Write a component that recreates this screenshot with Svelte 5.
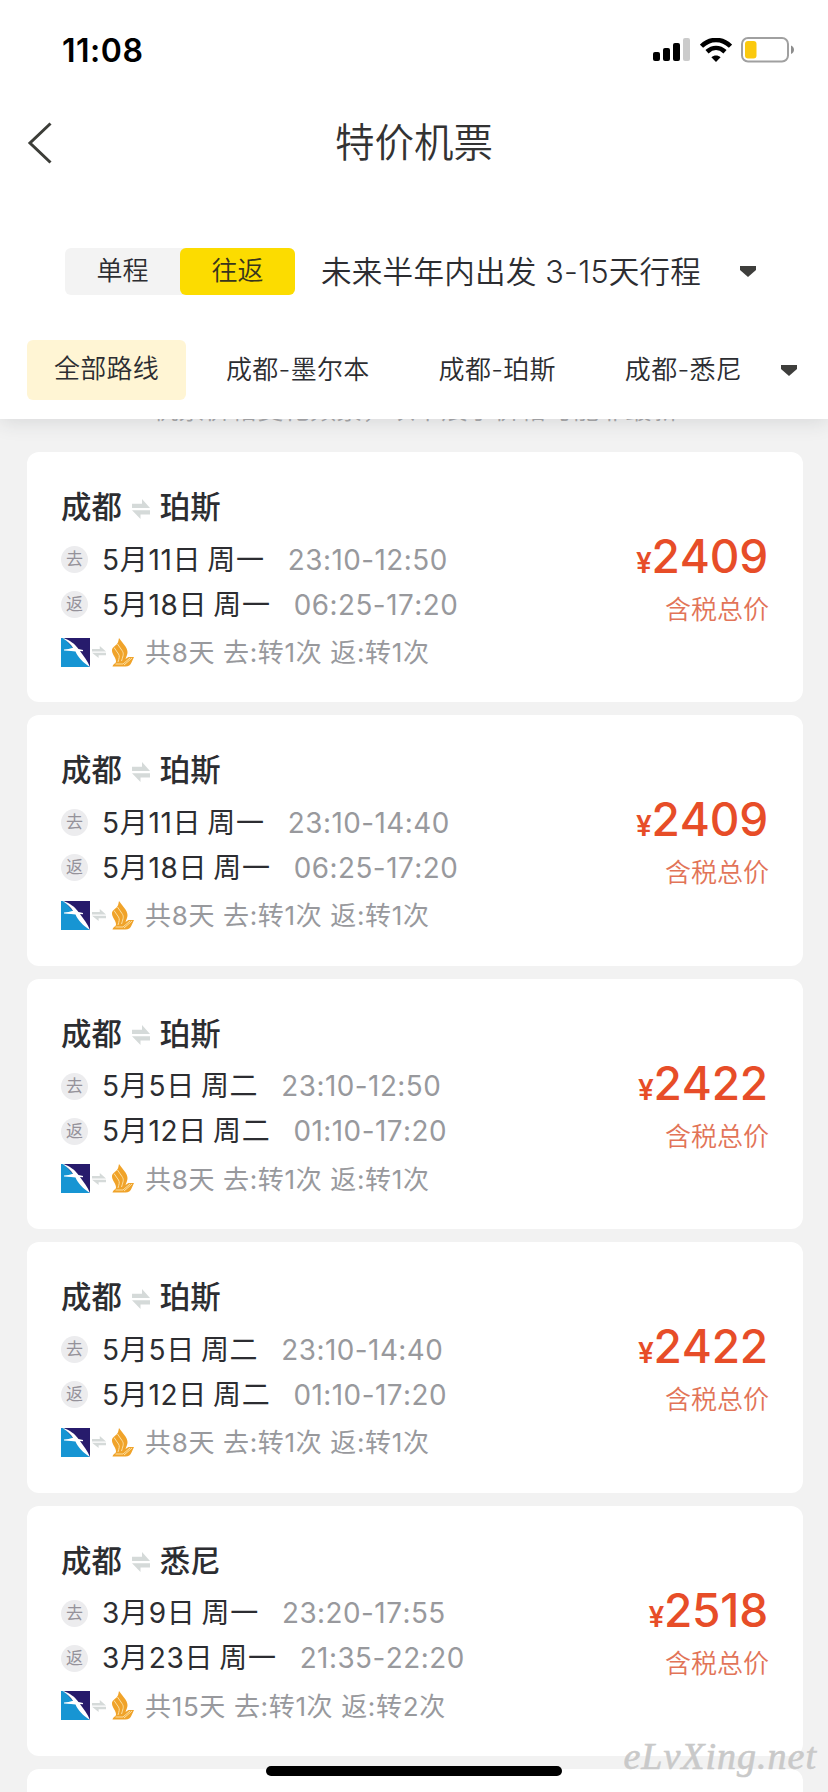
<script>
  const flights = [
    { to: '珀斯', out: '5月11日 周一', outTime: '23:10-12:50', back: '5月18日 周一', backTime: '06:25-17:20', info: '共8天 去:转1次 返:转1次', price: '2409' },
    { to: '珀斯', out: '5月11日 周一', outTime: '23:10-14:40', back: '5月18日 周一', backTime: '06:25-17:20', info: '共8天 去:转1次 返:转1次', price: '2409' },
    { to: '珀斯', out: '5月5日 周二', outTime: '23:10-12:50', back: '5月12日 周二', backTime: '01:10-17:20', info: '共8天 去:转1次 返:转1次', price: '2422' },
    { to: '珀斯', out: '5月5日 周二', outTime: '23:10-14:40', back: '5月12日 周二', backTime: '01:10-17:20', info: '共8天 去:转1次 返:转1次', price: '2422' },
    { to: '悉尼', out: '3月9日 周一', outTime: '23:20-17:55', back: '3月23日 周一', backTime: '21:35-22:20', info: '共15天 去:转1次 返:转2次', price: '2518' }
  ];
  const routes = ['全部路线', '成都-墨尔本', '成都-珀斯', '成都-悉尼'];
</script>

{#snippet swap(w, h)}
  <svg width={w} height={h} viewBox="0 0 18 20" preserveAspectRatio="none">
    <path d="M0 4.800h10V0l8 9H0zM18 11.200H0l8.500 8.800V15.400H18z" fill="#d5dad9" />
  </svg>
{/snippet}

{#snippet caret()}
  <svg width="16" height="11" viewBox="0 0 16 11"><path d="M0 0h16v4L8 11 0 4z" fill="#3e3e3c" /></svg>
{/snippet}

<div class="screen">
  <header>
    <div class="status">
      <span class="clock">11:08</span>
      <div class="signals">
        <svg width="38" height="24" viewBox="0 0 38 24">
          <rect x="0" y="14" width="7" height="9" rx="2" />
          <rect x="10" y="10" width="7" height="13" rx="2" />
          <rect x="20" y="5" width="7" height="18" rx="2" />
          <rect x="30" y="0" width="7" height="23" rx="2" fill="#cbcbcb" />
        </svg>
        <svg class="wifi" width="32" height="24" viewBox="0 0 32 24">
          <path d="M1.500 8.200C10 -0.100 22 -0.100 30.500 8.200" fill="none" stroke="#000" stroke-width="4.600" />
          <path d="M7 13.800c5.500-5 12.500-5 18 0" fill="none" stroke="#000" stroke-width="4.600" />
          <path d="M16 24l-4.600-4.700c2.600-2.300 6.600-2.300 9.200 0z" />
        </svg>
        <svg class="battery" width="54" height="26" viewBox="0 0 54 26">
          <rect x="1" y="1" width="46" height="23.500" rx="6" fill="none" stroke="#a0a0a0" stroke-width="2" />
          <rect x="4" y="4" width="11.500" height="17.500" rx="3" fill="#fbc90e" />
          <path d="M50 8.500c4 1.500 4 7 0 8.500z" fill="#8d8d8d" />
        </svg>
      </div>
    </div>
    <nav>
      <svg class="chevron" width="26" height="42" viewBox="0 0 26 42"><path d="M23.500 1.500L3 21l20.500 19.500" fill="none" stroke="#3c3d38" stroke-width="3" /></svg>
      <h1>特价机票</h1>
    </nav>
    <div class="filters">
      <div class="segment"><span>单程</span><span class="on">往返</span></div>
      <div class="period">未来半年内出发 3-15天行程</div>
      {@render caret()}
    </div>
    <div class="routes">
      {#each routes as r, i}
        <span class="route" class:active={i === 0}>{r}</span>
      {/each}
      {@render caret()}
    </div>
  </header>

  <main>
    <p class="notice">机票价格变化频繁，以下展示价格可能非最新</p>
    {#each flights as f}
      <article>
        <div class="details">
          <h2>成都{@render swap(18, 20)}{f.to}</h2>
          <div class="leg"><b>去</b><span class="date">{f.out}</span><span class="time">{f.outTime}</span></div>
          <div class="leg"><b>返</b><span class="date">{f.back}</span><span class="time">{f.backTime}</span></div>
          <div class="airlines">
            <svg width="29" height="29" viewBox="0 0 29 29">
              <path d="M0 0h29v29H0z" fill="#1795d3" />
              <path d="M3 0h26v29z" fill="#271b6c" />
              <path d="M1.500 0C9 2 14 6 17.500 11l4.500 1v1.200l-3-.2c3.500 5 7.500 9.500 10 16-7-4.500-12-9.500-14.500-15.500L10 13l-7-.5v-1l4.500-.5 4.500-1.200C10 6.500 6 3 1.500 0z" fill="#fff" />
            </svg>
            <span class="mini">{@render swap(14, 12)}</span>
            <svg width="22" height="29" viewBox="0 0 22 29">
              <path d="M7 0l6.500 8.500c2 3 2.500 6 1.500 8.500l-1.500 4 3-2H22l-2.500 5.500c-1 2.500-3 4-6 4H.5C1 26 4 25.500 4 23.500c0-4-4-7-4-11C0 9.500 2 9 4.500 6.500 6.500 4.500 6.500 2 7 0z" fill="#f0a32a" />
              <path d="M5.500 6l4.500 6.500c2 3 1.500 4-.5 10.500M2 9.500l4.500 6.500c1.500 2.500.5 4-.5 8M3.500 26H11l7-6M12 27l8-7" fill="none" stroke="#fbe0a4" stroke-width="1" />
            </svg>
            <span class="info">{f.info}</span>
          </div>
        </div>
        <div class="cost">
          <div class="price"><small>¥</small>{f.price}</div>
          <div class="tax">含税总价</div>
        </div>
      </article>
    {/each}
    <article></article>
  </main>
  <div class="home"></div>
  <div class="mark">eLvXing.net</div>
</div>

<style>
  :global(body) { margin: 0; }
  .screen {
    position: relative; width: 828px; height: 1792px; overflow: hidden; background: #f2f2f2;
    font-family: Inter, "Noto Sans CJK SC", sans-serif; color: #2c2d31; font-kerning: none;
  }
  svg { display: block; flex: none; }
  header {
    position: relative; z-index: 1; height: 419px; box-sizing: border-box; background: #fff;
    box-shadow: 0 2px 20px rgba(40, 50, 60, .14); display: flex; flex-direction: column;
  }
  .status { height: 98px; display: flex; justify-content: space-between; padding: 0 33px 0 62px; }
  .clock { font-size: 32px; line-height: 101px; font-weight: 600; color: #000; letter-spacing: .5px; }
  .signals { display: flex; align-items: flex-start; padding-top: 38px; }
  .wifi { margin-left: 9px; }
  .battery { margin: -1px 0 0 9px; }
  nav { height: 90px; display: grid; grid-template-columns: 100px 1fr 100px; align-items: center; }
  .chevron { margin-left: 27px; }
  h1 { margin: 0; font-size: 39.500px; line-height: 60px; font-weight: 350; text-align: center; color: #333; }
  .filters { margin-top: 60px; height: 47px; display: flex; align-items: center; padding: 0 72px 0 65px; }
  .segment { display: flex; width: 230px; height: 47px; background: #f3f3f3; border-radius: 6px; font-size: 26px; line-height: 46px; text-align: center; flex: none; font-weight: 350; }
  .segment span { flex: 1; }
  .segment .on { background: #fcdc00; border-radius: 6px; color: #38351d; }
  .period { flex: 1; margin-left: 26px; font-size: 30.600px; line-height: 46px; white-space: nowrap; letter-spacing: .2px; font-weight: 350; }
  .routes { margin-top: 45px; height: 60px; display: flex; align-items: center; padding-left: 27px; font-size: 26px; font-weight: 350; }
  .route { line-height: 58px; white-space: nowrap; margin-right: 69px; letter-spacing: .3px; }
  .route.active { width: 159px; height: 60px; text-align: center; background: #fff5d4; border-radius: 6px; margin-right: 40px; }
  .route:nth-child(4) { margin-right: 39px; }
  main { padding: 0 25px 0 27px; }
  .notice { margin: -24px 0 0; height: 57px; line-height: 30px; font-size: 26.300px; color: #a9a9ab; text-align: center; white-space: nowrap; font-weight: 350; }
  article { display: flex; justify-content: space-between; box-sizing: border-box; height: 250.400px; margin-bottom: 13px; padding: 35px 35px 0 34px; background: #fff; border-radius: 12px; }
  h2 { display: flex; align-items: center; gap: 10px; margin: 0; height: 40px; font-size: 30.400px; line-height: 40px; font-weight: 500; }
  h2 svg { margin-top: 3px; }
  .leg { display: flex; align-items: center; height: 45px; }
  h2 + .leg { margin-top: 10px; }
  .leg b { width: 27px; height: 27px; border-radius: 50%; background: #ececee; color: #95929a; font-size: 17px; line-height: 26px; text-align: center; font-weight: 400; margin-right: 14px; }
  .date { font-size: 28px; white-space: pre; letter-spacing: .7px; word-spacing: -2.500px; font-weight: 370; line-height: 42px; margin-top: 0; }
  .time { font-size: 27.800px; color: #98999d; margin-left: 23px; letter-spacing: .5px; }
  .airlines { display: flex; align-items: center; height: 50px; }
  .mini { margin: 0 6px 0 2px; }
  .info { margin: -3px 0 0 11px; font-size: 26px; color: #98999d; white-space: nowrap; font-weight: 370; letter-spacing: .65px; }
  .cost { text-align: right; padding-top: 43px; }
  .price { font-size: 46px; line-height: 52px; font-weight: 500; color: #e74d28; letter-spacing: -.2px; }
  small { font-size: 28px; font-weight: 600; margin-right: 0; }
  .tax { margin: 3px -1px 0 0; font-size: 26px; line-height: 36px; color: #e27458; font-weight: 350; }
  .home { position: absolute; z-index: 2; left: 266px; top: 1766px; width: 296px; height: 10px; border-radius: 5px; background: #000; }
  .mark { position: absolute; z-index: 3; right: 11px; top: 1734px; font: italic 38px/44px "Liberation Serif", serif; color: #c9c9c9; letter-spacing: 1px; -webkit-text-stroke: .6px #c9c9c9; }
</style>
